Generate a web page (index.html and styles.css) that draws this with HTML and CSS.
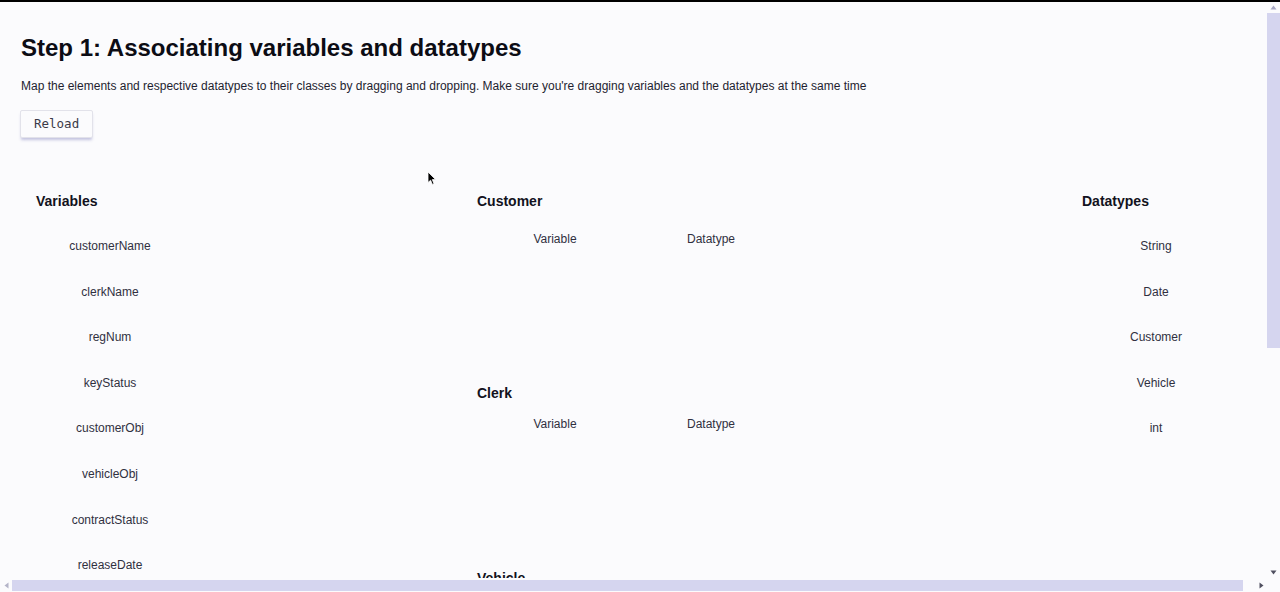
FILE: index.html
```html
<!DOCTYPE html>
<html lang="en">
<head>
<meta charset="utf-8">
<title>Step 1: Associating variables and datatypes</title>
<link rel="stylesheet" href="styles.css">
</head>
<body>
<div class="viewport">
  <div class="scroller">
    <div class="page">
      <h1 class="title">Step 1: Associating variables and datatypes</h1>
      <p class="intro">Map the elements and respective datatypes to their classes by dragging and dropping. Make sure you're dragging variables and the datatypes at the same time</p>
      <button class="reload" type="button">Reload</button>

      <div class="board">
        <section class="col">
          <h2 class="col-title">Variables</h2>
          <ul class="items">
            <li class="item">customerName</li>
            <li class="item">clerkName</li>
            <li class="item">regNum</li>
            <li class="item">keyStatus</li>
            <li class="item">customerObj</li>
            <li class="item">vehicleObj</li>
            <li class="item">contractStatus</li>
            <li class="item">releaseDate</li>
          </ul>
        </section>

        <section class="col">
          <div class="klass klass-first">
            <h2 class="col-title">Customer</h2>
            <div class="slots">
              <div class="slot-head">Variable</div>
              <div class="slot-head">Datatype</div>
            </div>
            <div class="drop"></div>
          </div>
          <div class="klass">
            <h2 class="col-title">Clerk</h2>
            <div class="slots">
              <div class="slot-head">Variable</div>
              <div class="slot-head">Datatype</div>
            </div>
            <div class="drop"></div>
          </div>
          <div class="klass">
            <h2 class="col-title">Vehicle</h2>
            <div class="slots">
              <div class="slot-head">Variable</div>
              <div class="slot-head">Datatype</div>
            </div>
            <div class="drop"></div>
          </div>
        </section>

        <section class="col">
          <h2 class="col-title">Datatypes</h2>
          <ul class="items">
            <li class="item">String</li>
            <li class="item">Date</li>
            <li class="item">Customer</li>
            <li class="item">Vehicle</li>
            <li class="item">int</li>
          </ul>
        </section>
      </div>

      <svg class="cursor" width="10" height="15" viewBox="0 0 10 15" aria-hidden="true">
        <path d="M1 1 L1 11.5 L3.6 9.2 L5.4 13.4 L7 12.7 L5.3 8.6 L8.6 8.6 Z" fill="#000" stroke="#fff" stroke-width="0.8" stroke-linejoin="round"/>
      </svg>
    </div>
  </div>

  <div class="vbar">
    <div class="sb-btn sb-btn-v">
      <svg width="7" height="5" viewBox="0 0 7 5"><path d="M3.5 0.5 L6.5 4.5 L0.5 4.5 Z" fill="#a7a7c4"/></svg>
    </div>
    <div class="vtrack"><div class="vthumb"></div></div>
    <div class="sb-btn sb-btn-v">
      <svg width="7" height="5" viewBox="0 0 7 5"><path d="M0.5 0.5 L6.5 0.5 L3.5 4.5 Z" fill="#505060"/></svg>
    </div>
  </div>

  <div class="hbar">
    <div class="sb-btn sb-btn-h">
      <svg width="5" height="7" viewBox="0 0 5 7"><path d="M4.5 0.5 L4.5 6.5 L0.5 3.5 Z" fill="#b4b4c8"/></svg>
    </div>
    <div class="htrack"><div class="hthumb"></div></div>
    <div class="sb-btn sb-btn-h">
      <svg width="5" height="7" viewBox="0 0 5 7"><path d="M0.5 0.5 L4.5 3.5 L0.5 6.5 Z" fill="#505060"/></svg>
    </div>
  </div>

  <div class="corner"></div>
</div>
</body>
</html>
```

FILE: styles.css
```css
html, body {
  margin: 0;
  padding: 0;
  height: 100%;
  overflow: hidden;
}

body {
  background: #fbfbfd;
  border-top: 2px solid #000;
  box-sizing: border-box;
  font-family: "Liberation Sans", Arial, sans-serif;
  color: #1c1c2a;
}

.viewport {
  width: 1280px;
  height: 590px;
  display: grid;
  grid-template-columns: 1267px 13px;
  grid-template-rows: 576px 14px;
  background: #fbfbfd;
}

.scroller {
  grid-column: 1;
  grid-row: 1;
  overflow: hidden;
}

/* fake scrollbars */
.vbar {
  grid-column: 2;
  grid-row: 1;
  display: flex;
  flex-direction: column;
}

.hbar {
  grid-column: 1;
  grid-row: 2;
  display: flex;
}

.corner {
  grid-column: 2;
  grid-row: 2;
}

.sb-btn {
  display: flex;
  align-items: center;
  justify-content: center;
  flex: none;
}

.sb-btn-v {
  height: 11px;
}

.sb-btn-h {
  width: 12px;
}

.vtrack {
  flex: 1;
}

.vthumb {
  height: 335px;
  background: #d5d5ef;
}

.htrack {
  flex: 1;
  padding-top: 2px;
}

.hthumb {
  width: 1231px;
  height: 11px;
  background: #d5d5ef;
}

/* page */
.page {
  position: relative;
  width: 1280px;
  height: 950px;
  box-sizing: border-box;
  padding: 32px 0 0 21px;
}

.title {
  margin: 0;
  font-size: 24px;
  line-height: 28px;
  font-weight: bold;
  color: #0c0c14;
}

.intro {
  margin: 17px 0 0;
  font-size: 12px;
  line-height: 14px;
  color: #1e1e30;
}

.reload {
  display: block;
  margin: 17px 0 0 -1px;
  padding: 6px 13px;
  height: 28px;
  box-sizing: border-box;
  font-family: "DejaVu Sans Mono", "Liberation Mono", monospace;
  font-size: 12.5px;
  line-height: 14px;
  color: #3a3a48;
  background: #fbfbfd;
  border: 1px solid #e2e2ea;
  border-radius: 2px;
  box-shadow: 0 3px 3px -1px rgba(90, 90, 170, 0.35);
}

.board {
  display: grid;
  grid-template-columns: 441px 605px 1fr;
  margin-top: 55px;
}

.col {
  padding: 0 15px;
}

.col-title {
  margin: 0;
  font-size: 14px;
  line-height: 16px;
  font-weight: bold;
  color: #121220;
}

.items {
  list-style: none;
  margin: 15px 0 0;
  padding: 0;
  width: 148px;
}

.item {
  padding: 16px 0;
  line-height: 13.6px;
  font-size: 12px;
  text-align: center;
  color: #30303f;
}

.slots {
  display: grid;
  grid-template-columns: 156px 156px;
  margin-top: 16px;
}

.klass-first .slots {
  margin-top: 23px;
}

.slot-head {
  font-size: 12px;
  line-height: 14px;
  text-align: center;
  color: #30303f;
}

.drop {
  height: 139px;
}

.cursor {
  position: absolute;
  left: 427px;
  top: 169px;
}
```
